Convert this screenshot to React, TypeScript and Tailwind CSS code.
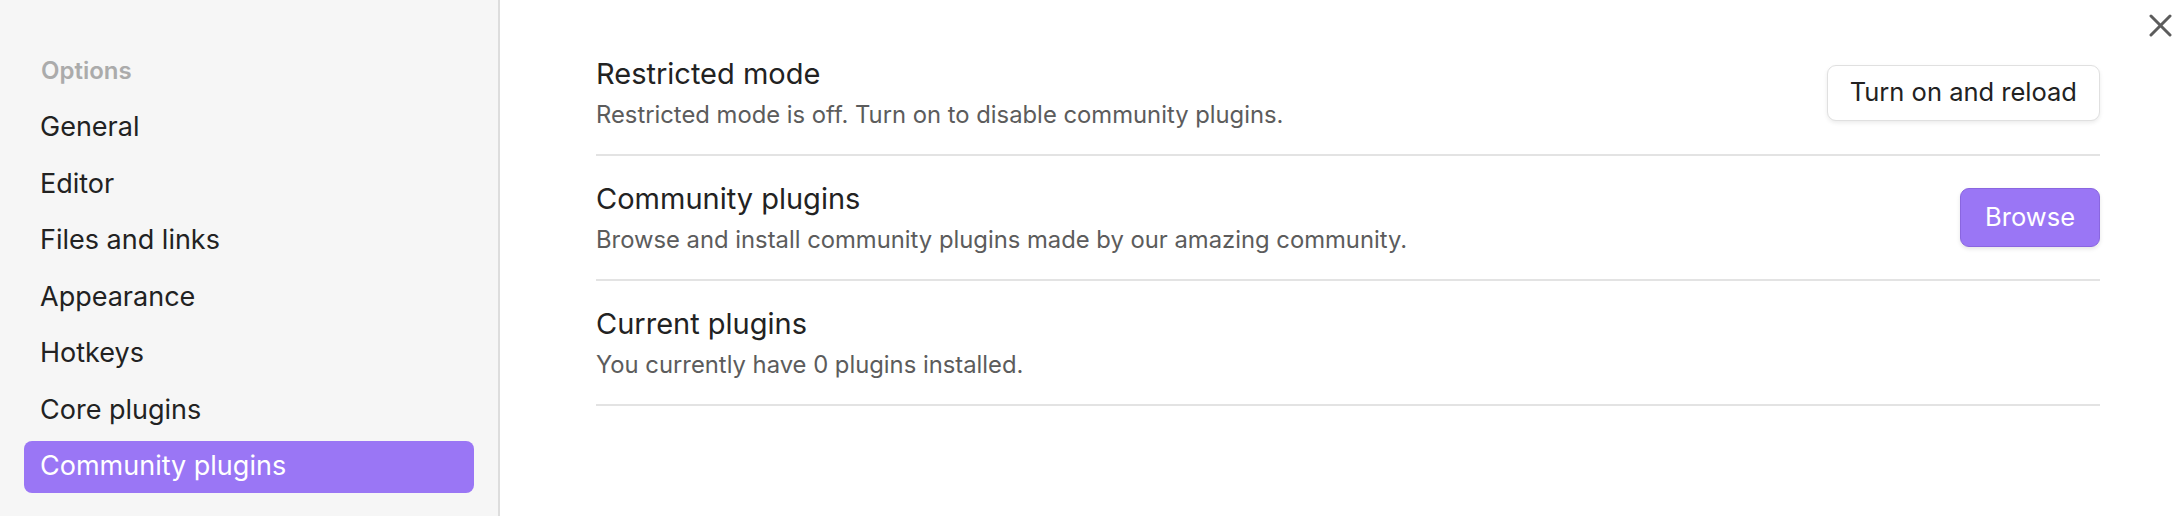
import React from "react";

const navItems = [
  "General",
  "Editor",
  "Files and links",
  "Appearance",
  "Hotkeys",
  "Core plugins",
  "Community plugins",
];

const Sidebar = (): JSX.Element => {
  return (
    <aside className="w-[500px] shrink-0 bg-[#f6f6f6] border-r-2 border-[#dddddd] px-6 pt-[45px]">
      <nav className="flex flex-col gap-[4.5px]">
        <div className="h-[52px] flex items-center px-[17px] text-[24px] font-semibold text-[#ababab]">
          Options
        </div>
        {navItems.map((item) => {
          const active = item === "Community plugins";
          return (
            <div
              key={item}
              className={
                active
                  ? "h-[52px] flex items-center px-[16px] rounded-[8px] bg-[#9a76f5] text-white text-[27px]"
                  : "h-[52px] flex items-center px-[16px] rounded-[8px] text-[#222222] text-[27px]"
              }
            >
              {item}
            </div>
          );
        })}
      </nav>
    </aside>
  );
};

type SettingProps = {
  name: string;
  desc: string;
  children?: React.ReactNode;
};

const SettingRow = ({ name, desc, children }: SettingProps): JSX.Element => {
  return (
    <div className="h-[125px] flex items-center justify-between border-b-2 border-[#e3e3e3]">
      <div className="flex flex-col gap-[8px]">
        <div className="text-[29px] leading-[36px] text-[#222222]">{name}</div>
        <div className="text-[23.8px] leading-[30px] text-[#5c5c5c]">{desc}</div>
      </div>
      {children}
    </div>
  );
};

const App = (): JSX.Element => {
  return (
    <div
      className="w-[2184px] h-[516px] flex bg-white overflow-hidden"
      style={{ fontFamily: "Inter, 'Noto Sans', sans-serif" }}
    >
      <Sidebar />
      <main className="relative flex-1 pl-[96px] pr-[84px] pt-[31px]">
        <button className="absolute top-[14px] right-[12px] w-[23px] h-[23px] text-[#5c5c5c]">
          <svg viewBox="0 0 23 23" width="23" height="23" fill="none" stroke="currentColor" strokeWidth="3" strokeLinecap="round">
            <line x1="2" y1="2" x2="21" y2="21" />
            <line x1="21" y1="2" x2="2" y2="21" />
          </svg>
        </button>
        <SettingRow
          name="Restricted mode"
          desc="Restricted mode is off. Turn on to disable community plugins."
        >
          <button className="h-[56px] px-[22px] rounded-[9px] bg-white border border-[#e0e0e0] shadow-[0_2px_4px_rgba(0,0,0,0.08)] text-[25.5px] text-[#222222]">
            Turn on and reload
          </button>
        </SettingRow>
        <SettingRow
          name="Community plugins"
          desc="Browse and install community plugins made by our amazing community."
        >
          <button className="h-[59px] px-[24px] rounded-[9px] bg-[#9a76f5] border border-[#8a66e0] shadow-[0_2px_4px_rgba(0,0,0,0.1)] text-[25.5px] text-white">
            Browse
          </button>
        </SettingRow>
        <SettingRow
          name="Current plugins"
          desc="You currently have 0 plugins installed."
        />
      </main>
    </div>
  );
};

export default App;
